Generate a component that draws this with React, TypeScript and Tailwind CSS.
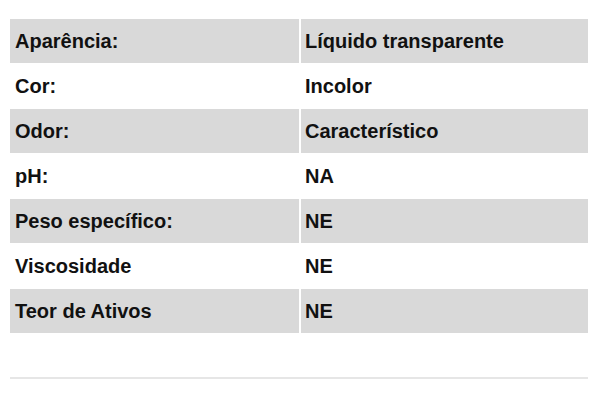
import React from 'react';

type Row = {
  label: string;
  value: string;
};

const rows: Row[] = [
  { label: 'Aparência:', value: 'Líquido transparente' },
  { label: 'Cor:', value: 'Incolor' },
  { label: 'Odor:', value: 'Característico' },
  { label: 'pH:', value: 'NA' },
  { label: 'Peso específico:', value: 'NE' },
  { label: 'Viscosidade', value: 'NE' },
  { label: 'Teor de Ativos', value: 'NE' }
];

const App: React.FC = () => {
  return (
    <div className="w-[600px] h-[400px] bg-white font-['Liberation_Sans',Arial,sans-serif] overflow-hidden">
      <div className="pt-[19px] px-[10px]">
        <div className="grid grid-cols-[289px_287px] gap-x-[2px] gap-y-[1px]">
          {rows.map((row, i) => {
            const bg = i % 2 === 0 ? 'bg-[#d9d9d9]' : 'bg-white';
            return (
              <React.Fragment key={row.label}>
                <div className={`h-[44px] flex items-center pl-[5px] text-[20px] font-bold text-[#111] ${bg}`}>
                  {row.label}
                </div>
                <div className={`h-[44px] flex items-center pl-[4px] text-[20px] font-bold text-[#111] ${bg}`}>
                  {row.value}
                </div>
              </React.Fragment>
            );
          })}
        </div>

        {/* bottom rule */}
        <div className="mt-[44px] h-[2px] w-[578px] bg-[#e6e6e6]" />
      </div>
    </div>
  );
};

export default App;
